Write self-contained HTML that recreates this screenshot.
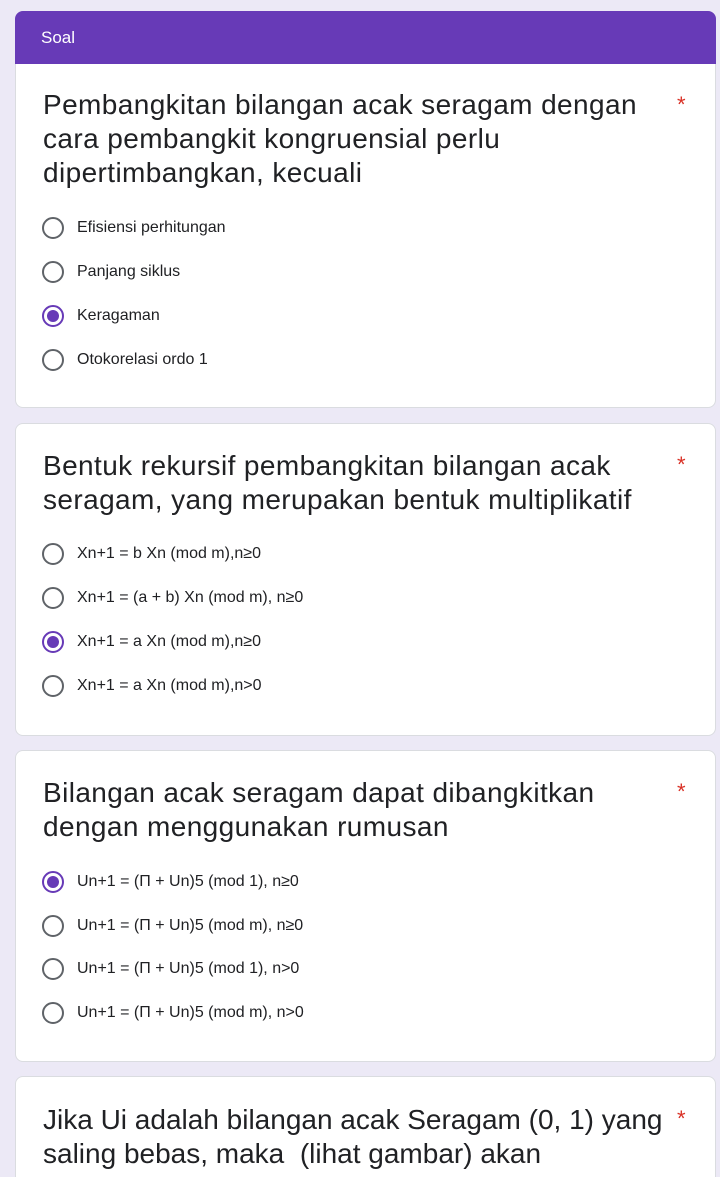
<!DOCTYPE html>
<html style="overflow:hidden;height:1177px"><head><meta charset="utf-8"><style>
*{margin:0;padding:0;box-sizing:border-box}
body{width:720px;height:1177px;background:#ece9f6;overflow:hidden;position:relative;font-family:"Liberation Sans",sans-serif;color:#202124}
.card{position:absolute;left:15px;width:701px;background:#fff;border-radius:8px;border:1px solid #dadce0}
.hdr{position:absolute;left:15px;top:11px;width:701px;height:53px;background:#673ab7;border-radius:8px 8px 0 0;color:#fff;font-size:17px;padding:17px 0 0 26px}
.q{position:absolute;left:43px;font-size:28px;line-height:34px;letter-spacing:0.4px;color:#202124;white-space:nowrap}
.star{position:absolute;left:677px;color:#d93025;font-size:22px}
.o{position:absolute;left:42px;height:22px;font-size:16px;line-height:22px;color:#202124;white-space:nowrap}
.o i{position:absolute;left:0;top:0;width:22px;height:22px;border:2px solid #5f6368;border-radius:50%}
.o.s i{border-color:#673ab7}
.o.s i:after{content:"";position:absolute;left:3px;top:3px;width:12px;height:12px;border-radius:50%;background:#673ab7}
.o span{position:absolute;left:35px;top:0}
</style></head><body>
<div class="card" style="top:11px;height:397px"></div>
<div class="hdr">Soal</div>
<div class="q" style="top:88px">Pembangkitan bilangan acak seragam dengan<br>cara pembangkit kongruensial perlu<br>dipertimbangkan, kecuali</div>
<div class="star" style="top:92px">*</div>
<div class="o" style="top:217px"><i></i><span>Efisiensi perhitungan</span></div>
<div class="o" style="top:261px"><i></i><span>Panjang siklus</span></div>
<div class="o s" style="top:305px"><i></i><span>Keragaman</span></div>
<div class="o" style="top:349px"><i></i><span>Otokorelasi ordo 1</span></div>

<div class="card" style="top:423px;height:313px"></div>
<div class="q" style="top:449px">Bentuk rekursif pembangkitan bilangan acak<br>seragam, yang merupakan bentuk multiplikatif</div>
<div class="star" style="top:452px">*</div>
<div class="o" style="top:543px"><i></i><span>Xn+1 = b Xn (mod m),n≥0</span></div>
<div class="o" style="top:587px"><i></i><span>Xn+1 = (a + b) Xn (mod m), n≥0</span></div>
<div class="o s" style="top:631px"><i></i><span>Xn+1 = a Xn (mod m),n≥0</span></div>
<div class="o" style="top:675px"><i></i><span>Xn+1 = a Xn (mod m),n&gt;0</span></div>

<div class="card" style="top:750px;height:312px"></div>
<div class="q" style="top:776px">Bilangan acak seragam dapat dibangkitkan<br>dengan menggunakan rumusan</div>
<div class="star" style="top:779px">*</div>
<div class="o s" style="top:871px"><i></i><span>Un+1 = (Π + Un)5 (mod 1), n≥0</span></div>
<div class="o" style="top:915px"><i></i><span>Un+1 = (Π + Un)5 (mod m), n≥0</span></div>
<div class="o" style="top:958px"><i></i><span>Un+1 = (Π + Un)5 (mod 1), n&gt;0</span></div>
<div class="o" style="top:1002px"><i></i><span>Un+1 = (Π + Un)5 (mod m), n&gt;0</span></div>

<div class="card" style="top:1076px;height:130px"></div>
<div class="q" style="top:1103px;letter-spacing:0">Jika Ui adalah bilangan acak Seragam (0, 1) yang<br>saling bebas, maka &nbsp;(lihat gambar) akan<br>memiliki sebaran yang sama dengan U(0, 1) untuk</div>
<div class="star" style="top:1106px">*</div>
</body></html>
